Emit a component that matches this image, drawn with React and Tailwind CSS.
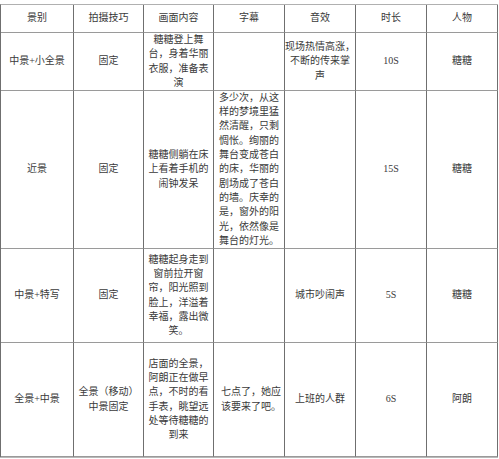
const cols = "grid-cols-[73px_70px_70px_71px_71px_71px_71px]";

const header = ["景别", "拍摄技巧", "画面内容", "字幕", "音效", "时长", "人物"];

const rows = [
  {
    h: "h-[58px]",
    cells: [
      ["中景+小全景"],
      ["固定"],
      ["糖糖登上舞", "台，身着华丽", "衣服，准备表", "演"],
      [],
      ["现场热情高涨，", "不断的传来掌", "声"],
      ["10S"],
      ["糖糖"],
    ],
  },
  {
    h: "h-[158px]",
    cells: [
      ["近景"],
      ["固定"],
      ["糖糖侧躺在床", "上看着手机的", "闹钟发呆"],
      [
        "多少次，从这",
        "样的梦境里猛",
        "然清醒，只剩",
        "惆怅。绚丽的",
        "舞台变成苍白",
        "的床，华丽的",
        "剧场成了苍白",
        "的墙。庆幸的",
        "是，窗外的阳",
        "光，依然像是",
        "舞台的灯光。",
      ],
      [],
      ["15S"],
      ["糖糖"],
    ],
  },
  {
    h: "h-[94px]",
    cells: [
      ["中景+特写"],
      ["固定"],
      ["糖糖起身走到", "窗前拉开窗", "帘，阳光照到", "脸上，洋溢着", "幸福，露出微", "笑。"],
      [],
      ["城市吵闹声"],
      ["5S"],
      ["糖糖"],
    ],
  },
  {
    h: "h-[114px]",
    cells: [
      ["全景+中景"],
      ["全景（移动）", "中景固定"],
      ["店面的全景，", "阿朗正在做早", "点，不时的看", "手表，眺望远", "处等待糖糖的", "到来"],
      ["七点了，她应", "该要来了吧。"],
      ["上班的人群"],
      ["6S"],
      ["阿朗"],
    ],
  },
];

function Cell({ lines, h, left }) {
  return (
    <div
      className={`${h} border-r border-b border-r-[#6f6f6f] border-b-[#9a9a9a] flex flex-col justify-center ${
        left ? "items-start pl-[7px]" : "items-center"
      } overflow-hidden`}
    >
      {lines.map((t, i) => (
        <div key={i} className="whitespace-nowrap leading-[14.3px]">
          {t}
        </div>
      ))}
    </div>
  );
}

export default function App() {
  return (
    <div
      className="w-[499px] h-[459px] bg-white pt-[4px] text-[10px] text-[#3a3a3a]"
      style={{ fontFamily: '"Liberation Serif", "Noto Sans CJK SC", serif' }}
    >
      <div className={`grid ${cols} w-[498px] border-t border-l border-t-[#b0b0b0] border-l-[#6f6f6f]`}>
        {header.map((t) => (
          <Cell key={t} lines={[t]} h="h-[28px]" />
        ))}
        {rows.map((r, ri) =>
          r.cells.map((c, ci) => (
            <Cell
              key={ri + "-" + ci}
              lines={c}
              h={r.h}
              left={ci === 3 && ri === 3}
            />
          ))
        )}
      </div>
      <div className="w-[498px] h-[1px] bg-[#b8b8b8]" />
    </div>
  );
}
